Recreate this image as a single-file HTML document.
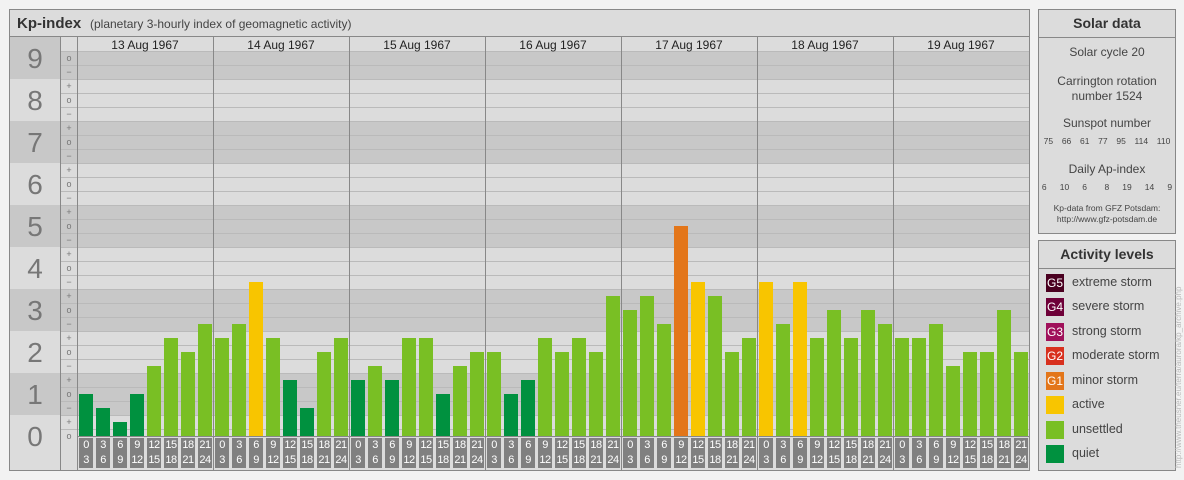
<!DOCTYPE html>
<html><head><meta charset="utf-8"><style>
body{margin:0;width:1184px;height:480px;background:#f2f2f2;font-family:"Liberation Sans",sans-serif;position:relative;overflow:hidden}
.ax{position:absolute;top:438px;display:flex}
.ax b{display:block;width:14px;height:30px;margin:0 1.5px;background:#808080;color:#fff;font-weight:normal;font-size:11px;line-height:15px;text-align:center;letter-spacing:-0.5px}
.c{position:absolute;left:1038px;width:138px;text-align:center;color:#444}
.lg{position:absolute;left:1046px;width:18px;height:18px;color:#fff;font-size:12px;line-height:18px;text-align:center}
.lt{position:absolute;left:1072px;font-size:12.5px;color:#444}
</style></head><body>
<svg width="1184" height="480" style="position:absolute;left:0;top:0" font-family="Liberation Sans, sans-serif">
<rect x="9.5" y="9.5" width="1020" height="461" fill="#dcdcdc" stroke="#888"/>
<line x1="10" y1="36.5" x2="1029" y2="36.5" stroke="#888"/>
<text x="17" y="28" font-size="15" font-weight="bold" fill="#333">Kp-index</text>
<text x="90" y="28" font-size="12" fill="#444">(planetary 3-hourly index of geomagnetic activity)</text>
<g fill="#c8c8c8">
<rect x="10" y="37" width="1019" height="42"/><rect x="10" y="121" width="1019" height="42"/><rect x="10" y="205" width="1019" height="42"/><rect x="10" y="289" width="1019" height="42"/><rect x="10" y="373" width="1019" height="42"/>
</g>
<rect x="60" y="37" width="969" height="14" fill="#dcdcdc"/>
<g stroke="#bababa">
<line x1="60" x2="1029" y1="429.5" y2="429.5"/><line x1="60" x2="1029" y1="415.5" y2="415.5"/><line x1="60" x2="1029" y1="401.5" y2="401.5"/><line x1="60" x2="1029" y1="387.5" y2="387.5"/><line x1="60" x2="1029" y1="373.5" y2="373.5"/><line x1="60" x2="1029" y1="359.5" y2="359.5"/><line x1="60" x2="1029" y1="345.5" y2="345.5"/><line x1="60" x2="1029" y1="331.5" y2="331.5"/><line x1="60" x2="1029" y1="317.5" y2="317.5"/><line x1="60" x2="1029" y1="303.5" y2="303.5"/><line x1="60" x2="1029" y1="289.5" y2="289.5"/><line x1="60" x2="1029" y1="275.5" y2="275.5"/><line x1="60" x2="1029" y1="261.5" y2="261.5"/><line x1="60" x2="1029" y1="247.5" y2="247.5"/><line x1="60" x2="1029" y1="233.5" y2="233.5"/><line x1="60" x2="1029" y1="219.5" y2="219.5"/><line x1="60" x2="1029" y1="205.5" y2="205.5"/><line x1="60" x2="1029" y1="191.5" y2="191.5"/><line x1="60" x2="1029" y1="177.5" y2="177.5"/><line x1="60" x2="1029" y1="163.5" y2="163.5"/><line x1="60" x2="1029" y1="149.5" y2="149.5"/><line x1="60" x2="1029" y1="135.5" y2="135.5"/><line x1="60" x2="1029" y1="121.5" y2="121.5"/><line x1="60" x2="1029" y1="107.5" y2="107.5"/><line x1="60" x2="1029" y1="93.5" y2="93.5"/><line x1="60" x2="1029" y1="79.5" y2="79.5"/><line x1="60" x2="1029" y1="65.5" y2="65.5"/><line x1="60" x2="1029" y1="51.5" y2="51.5"/>
</g>
<g stroke="#888">
<line x1="60.5" y1="37" x2="60.5" y2="470"/><line x1="77.5" y1="37" x2="77.5" y2="470"/>
<line x1="213.5" y1="37" x2="213.5" y2="470"/><line x1="349.5" y1="37" x2="349.5" y2="470"/><line x1="485.5" y1="37" x2="485.5" y2="470"/><line x1="621.5" y1="37" x2="621.5" y2="470"/><line x1="757.5" y1="37" x2="757.5" y2="470"/><line x1="893.5" y1="37" x2="893.5" y2="470"/>
<line x1="77" y1="436.5" x2="1029" y2="436.5"/>
</g>
<g font-size="12" fill="#222" text-anchor="middle">
<text x="145" y="49">13 Aug 1967</text><text x="281" y="49">14 Aug 1967</text><text x="417" y="49">15 Aug 1967</text><text x="553" y="49">16 Aug 1967</text><text x="689" y="49">17 Aug 1967</text><text x="825" y="49">18 Aug 1967</text><text x="961" y="49">19 Aug 1967</text>
</g>
<g font-size="28" fill="#777" text-anchor="middle">
<text x="35" y="446">0</text><text x="35" y="404">1</text><text x="35" y="362">2</text><text x="35" y="320">3</text><text x="35" y="278">4</text><text x="35" y="236">5</text><text x="35" y="194">6</text><text x="35" y="152">7</text><text x="35" y="110">8</text><text x="35" y="68">9</text>
</g>
<g font-size="9" fill="#777" text-anchor="middle">
<text x="69" y="439">o</text><text x="69" y="425">+</text>
<text x="69" y="411">−</text><text x="69" y="397">o</text><text x="69" y="383">+</text>
<text x="69" y="369">−</text><text x="69" y="355">o</text><text x="69" y="341">+</text>
<text x="69" y="327">−</text><text x="69" y="313">o</text><text x="69" y="299">+</text>
<text x="69" y="285">−</text><text x="69" y="271">o</text><text x="69" y="257">+</text>
<text x="69" y="243">−</text><text x="69" y="229">o</text><text x="69" y="215">+</text>
<text x="69" y="201">−</text><text x="69" y="187">o</text><text x="69" y="173">+</text>
<text x="69" y="159">−</text><text x="69" y="145">o</text><text x="69" y="131">+</text>
<text x="69" y="117">−</text><text x="69" y="103">o</text><text x="69" y="89">+</text>
<text x="69" y="75">−</text><text x="69" y="61">o</text>
</g>
<g>
<rect x="79" y="394" width="14" height="42" fill="#00913f"/><rect x="96" y="408" width="14" height="28" fill="#00913f"/><rect x="113" y="422" width="14" height="14" fill="#00913f"/><rect x="130" y="394" width="14" height="42" fill="#00913f"/><rect x="147" y="366" width="14" height="70" fill="#79bf24"/><rect x="164" y="338" width="14" height="98" fill="#79bf24"/><rect x="181" y="352" width="14" height="84" fill="#79bf24"/><rect x="198" y="324" width="14" height="112" fill="#79bf24"/>
<rect x="215" y="338" width="14" height="98" fill="#79bf24"/><rect x="232" y="324" width="14" height="112" fill="#79bf24"/><rect x="249" y="282" width="14" height="154" fill="#f8c500"/><rect x="266" y="338" width="14" height="98" fill="#79bf24"/><rect x="283" y="380" width="14" height="56" fill="#00913f"/><rect x="300" y="408" width="14" height="28" fill="#00913f"/><rect x="317" y="352" width="14" height="84" fill="#79bf24"/><rect x="334" y="338" width="14" height="98" fill="#79bf24"/>
<rect x="351" y="380" width="14" height="56" fill="#00913f"/><rect x="368" y="366" width="14" height="70" fill="#79bf24"/><rect x="385" y="380" width="14" height="56" fill="#00913f"/><rect x="402" y="338" width="14" height="98" fill="#79bf24"/><rect x="419" y="338" width="14" height="98" fill="#79bf24"/><rect x="436" y="394" width="14" height="42" fill="#00913f"/><rect x="453" y="366" width="14" height="70" fill="#79bf24"/><rect x="470" y="352" width="14" height="84" fill="#79bf24"/>
<rect x="487" y="352" width="14" height="84" fill="#79bf24"/><rect x="504" y="394" width="14" height="42" fill="#00913f"/><rect x="521" y="380" width="14" height="56" fill="#00913f"/><rect x="538" y="338" width="14" height="98" fill="#79bf24"/><rect x="555" y="352" width="14" height="84" fill="#79bf24"/><rect x="572" y="338" width="14" height="98" fill="#79bf24"/><rect x="589" y="352" width="14" height="84" fill="#79bf24"/><rect x="606" y="296" width="14" height="140" fill="#79bf24"/>
<rect x="623" y="310" width="14" height="126" fill="#79bf24"/><rect x="640" y="296" width="14" height="140" fill="#79bf24"/><rect x="657" y="324" width="14" height="112" fill="#79bf24"/><rect x="674" y="226" width="14" height="210" fill="#e3761a"/><rect x="691" y="282" width="14" height="154" fill="#f8c500"/><rect x="708" y="296" width="14" height="140" fill="#79bf24"/><rect x="725" y="352" width="14" height="84" fill="#79bf24"/><rect x="742" y="338" width="14" height="98" fill="#79bf24"/>
<rect x="759" y="282" width="14" height="154" fill="#f8c500"/><rect x="776" y="324" width="14" height="112" fill="#79bf24"/><rect x="793" y="282" width="14" height="154" fill="#f8c500"/><rect x="810" y="338" width="14" height="98" fill="#79bf24"/><rect x="827" y="310" width="14" height="126" fill="#79bf24"/><rect x="844" y="338" width="14" height="98" fill="#79bf24"/><rect x="861" y="310" width="14" height="126" fill="#79bf24"/><rect x="878" y="324" width="14" height="112" fill="#79bf24"/>
<rect x="895" y="338" width="14" height="98" fill="#79bf24"/><rect x="912" y="338" width="14" height="98" fill="#79bf24"/><rect x="929" y="324" width="14" height="112" fill="#79bf24"/><rect x="946" y="366" width="14" height="70" fill="#79bf24"/><rect x="963" y="352" width="14" height="84" fill="#79bf24"/><rect x="980" y="352" width="14" height="84" fill="#79bf24"/><rect x="997" y="310" width="14" height="126" fill="#79bf24"/><rect x="1014" y="352" width="14" height="84" fill="#79bf24"/>
</g>
<rect x="1038.5" y="9.5" width="137" height="224" fill="#dcdcdc" stroke="#888"/>
<line x1="1039" y1="37.5" x2="1175" y2="37.5" stroke="#888"/>
<rect x="1038.5" y="240.5" width="137" height="230" fill="#dcdcdc" stroke="#888"/>
<line x1="1039" y1="268.5" x2="1175" y2="268.5" stroke="#888"/>
<text transform="translate(1181,468) rotate(-90)" font-size="8" fill="#bbb">http://www.theusner.eu/terra/aurora/kp_archive.php</text>
</svg>
<div class="ax" style="left:77.5px"><b>0<br>3</b><b>3<br>6</b><b>6<br>9</b><b>9<br>12</b><b>12<br>15</b><b>15<br>18</b><b>18<br>21</b><b>21<br>24</b></div>
<div class="ax" style="left:213.5px"><b>0<br>3</b><b>3<br>6</b><b>6<br>9</b><b>9<br>12</b><b>12<br>15</b><b>15<br>18</b><b>18<br>21</b><b>21<br>24</b></div>
<div class="ax" style="left:349.5px"><b>0<br>3</b><b>3<br>6</b><b>6<br>9</b><b>9<br>12</b><b>12<br>15</b><b>15<br>18</b><b>18<br>21</b><b>21<br>24</b></div>
<div class="ax" style="left:485.5px"><b>0<br>3</b><b>3<br>6</b><b>6<br>9</b><b>9<br>12</b><b>12<br>15</b><b>15<br>18</b><b>18<br>21</b><b>21<br>24</b></div>
<div class="ax" style="left:621.5px"><b>0<br>3</b><b>3<br>6</b><b>6<br>9</b><b>9<br>12</b><b>12<br>15</b><b>15<br>18</b><b>18<br>21</b><b>21<br>24</b></div>
<div class="ax" style="left:757.5px"><b>0<br>3</b><b>3<br>6</b><b>6<br>9</b><b>9<br>12</b><b>12<br>15</b><b>15<br>18</b><b>18<br>21</b><b>21<br>24</b></div>
<div class="ax" style="left:893.5px"><b>0<br>3</b><b>3<br>6</b><b>6<br>9</b><b>9<br>12</b><b>12<br>15</b><b>15<br>18</b><b>18<br>21</b><b>21<br>24</b></div>

<div class="c" style="top:15px;font-size:14px;font-weight:bold;color:#333">Solar data</div>
<div class="c" style="top:45px;font-size:12px">Solar cycle 20</div>
<div class="c" style="top:74px;font-size:12px;line-height:15px">Carrington rotation<br>number 1524</div>
<div class="c" style="top:116px;font-size:12px">Sunspot number</div>
<div class="c" style="top:136px;font-size:8.5px;word-spacing:2px">75 &nbsp;66 &nbsp;61 &nbsp;77 &nbsp;95 &nbsp;114 &nbsp;110</div>
<div class="c" style="top:162px;font-size:12px">Daily Ap-index</div>
<div class="c" style="top:182px;font-size:8.5px;word-spacing:2px">6 &nbsp;&nbsp;10 &nbsp;&nbsp;6 &nbsp;&nbsp;&nbsp;8 &nbsp;&nbsp;19 &nbsp;&nbsp;14 &nbsp;&nbsp;9</div>
<div class="c" style="top:203px;font-size:8.5px;line-height:11px">Kp-data from GFZ Potsdam:<br>http://www.gfz-potsdam.de</div>

<div class="c" style="top:246px;font-size:14px;font-weight:bold;color:#333">Activity levels</div>
<div class="lg" style="top:274px;background:#4a0020">G5</div><div class="lt" style="top:275px">extreme storm</div>
<div class="lg" style="top:298px;background:#6e0038">G4</div><div class="lt" style="top:299px">severe storm</div>
<div class="lg" style="top:323px;background:#a0105a">G3</div><div class="lt" style="top:324px">strong storm</div>
<div class="lg" style="top:347px;background:#d8301e">G2</div><div class="lt" style="top:348px">moderate storm</div>
<div class="lg" style="top:372px;background:#e3761a">G1</div><div class="lt" style="top:373px">minor storm</div>
<div class="lg" style="top:396px;background:#f8c500"></div><div class="lt" style="top:397px">active</div>
<div class="lg" style="top:421px;background:#79bf24"></div><div class="lt" style="top:422px">unsettled</div>
<div class="lg" style="top:445px;background:#00913f"></div><div class="lt" style="top:446px">quiet</div>
</body></html>
